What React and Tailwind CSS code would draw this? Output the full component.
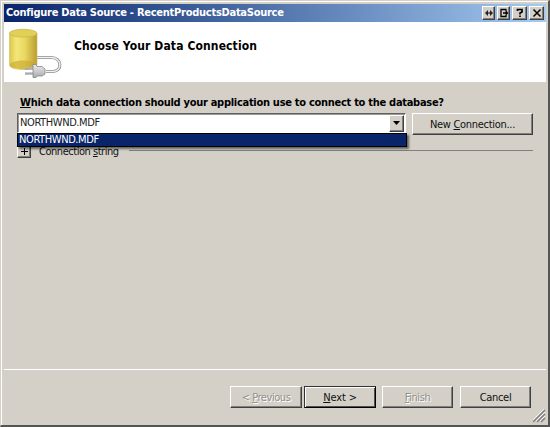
import React from "react";

const raised =
  "border border-t-white border-l-white border-r-[#404040] border-b-[#404040] shadow-[inset_-1px_-1px_0_#808080]";

function Key({ children }) {
  return <span className="underline decoration-1 underline-offset-1">{children}</span>;
}

function Caption({ width, children }) {
  return (
    <div className={`${width} ${raised} flex h-[14px] items-center justify-center bg-[#d4d0c8]`}>
      <svg width="10" height="10" viewBox="0 0 10 10" fill="none" stroke="#000" strokeWidth="1.500">
        {children}
      </svg>
    </div>
  );
}

function Button({ className, disabled, primary, children }) {
  return (
    <div
      className={`flex h-[22px] items-center justify-center whitespace-nowrap bg-[#d4d0c8] leading-[11px] ${
        primary
          ? "border border-t-[#333] border-l-[#333] border-r-black border-b-black shadow-[inset_1px_1px_0_#fff,inset_-1px_-1px_0_#505050]"
          : raised
      } ${disabled ? "text-[#929089] [text-shadow:1px_1px_0_#fff]" : "text-[#111]"} ${className}`}
    >
      <span>{children}</span>
    </div>
  );
}

function DatabaseIcon() {
  return (
    <svg className="ml-[4px] mt-[6px] shrink-0" width="60" height="50" viewBox="0 0 60 50">
      <defs>
        <linearGradient id="side">
          <stop offset="0" stopColor="#dcc746" />
          <stop offset="0.25" stopColor="#f3e67b" />
          <stop offset="0.55" stopColor="#ead960" />
          <stop offset="1" stopColor="#b99d33" />
        </linearGradient>
        <linearGradient id="plug" x2="0" y2="1">
          <stop offset="0" stopColor="#eee" />
          <stop offset="1" stopColor="#aaa" />
        </linearGradient>
      </defs>
      <path d="M1.500 5v32c0 6 27.500 6 27.500 0V5" fill="url(#side)" stroke="#d2bc52" strokeWidth=".6" />
      <path d="M2 37c0-6 26.500-6 26.500 0c0 5.500-26.500 5.500-26.500 0" fill="#c9a52e" opacity=".6" />
      <ellipse cx="15.200" cy="5.200" rx="13.700" ry="3.900" fill="#e2d056" stroke="#ccb74d" strokeWidth=".8" />
      <path d="M29 29.500H43c11.500 0 11.500 14 2 14H38" fill="none" stroke="#8c8c8c" strokeWidth="3" />
      <path d="M29 29.500H43c11.500 0 11.500 14 2 14H38" fill="none" stroke="#f2f2f2" strokeWidth="1.400" />
      <path d="M17 40.500h9M17 45.500h9" stroke="#888" strokeWidth="2.200" />
      <path d="M17 40h9M17 45h9" stroke="#ddd" strokeWidth=".8" />
      <path d="M25 36.500h3l1 2h5l3 2.500v5L34 48h-5l-1 1.500h-3z" fill="url(#plug)" stroke="#858585" strokeWidth=".8" />
    </svg>
  );
}

export default function App() {
  return (
    <div className="h-[427px] w-[550px] overflow-hidden bg-[#d4d0c8] font-['DejaVu_Sans_Condensed','DejaVu_Sans',sans-serif] text-[11px] text-[#111] [font-stretch:condensed]">
      <div className="flex h-full flex-col border-b-2 border-l border-r-2 border-t border-b-[#555] border-l-[#d4d0c8] border-r-[#555] border-t-[#d4d0c8]">
        <div className="flex min-h-0 flex-1 flex-col border-l border-t border-white pl-[2px] pr-[2px] pt-[2px]">
          <header className="flex h-[18px] shrink-0 items-center bg-linear-to-r from-[#0a246a] to-[#a6caf0] pl-[2px] pr-[2px]">
            <h1 className="flex-1 whitespace-nowrap text-[11px] font-bold tracking-[-0.260px] text-white">
              Configure Data Source - RecentProductsDataSource
            </h1>
            <div className="flex gap-[2px]">
              <Caption width="w-[13px]">
                <path d="M1 5l3-3v6zM9 5L6 2v6z" fill="#222" stroke="none" />
                <path d="M4 5h2" strokeWidth="1" />
              </Caption>
              <Caption width="w-[13px]">
                <path d="M7 3.500V1.500H2v7h5V6.500M4 5h4M7 3.500L8.500 5 7 6.500" strokeWidth="1.300" />
              </Caption>
              <Caption width="w-[15px]">
                <path d="M2.500 3V1.500h4.500V4L5 5v1.500M5 7.500V9" strokeWidth="1.700" />
              </Caption>
              <Caption width="w-[15px]">
                <path d="M1.500 1.500l7 7M8.500 1.500l-7 7" />
              </Caption>
            </div>
          </header>
          <section className="flex h-[60px] shrink-0 bg-white">
            <DatabaseIcon />
            <h2 className="ml-[6px] mt-[16px] whitespace-nowrap text-[12px] font-bold leading-[16px] tracking-[0.125px] text-black">
              Choose Your Data Connection
            </h2>
          </section>
          <main className="flex flex-1 flex-col pl-[13px] pr-[13px] pt-[14px]">
            <div className="ml-[3px] h-[17px] whitespace-nowrap text-[11px] font-bold leading-[14px] tracking-[-0.285px] text-black">
              <Key>W</Key>hich data connection should your application use to connect to the database?
            </div>
            <div className="flex items-start justify-between">
              <div className="relative w-[390px]">
                <div className="flex h-[20px] w-[389px] items-center border border-b-white border-l-[#606060] border-r-white border-t-[#606060] bg-white pl-[2px] shadow-[inset_1px_1px_0_#999]">
                  <span className="flex-1 tracking-[-0.400px] text-[#222]">NORTHWND.MDF</span>
                  <span className={`${raised} mr-[1px] flex h-[17px] w-[15px] items-center justify-center bg-[#d4d0c8]`}>
                    <svg width="7" height="4"><path d="M0 0h7L3.500 4z" /></svg>
                  </span>
                </div>
                <div className="absolute left-0 top-[20px] z-10 flex h-[14px] w-[390px] items-center border border-black bg-[#0a246a] pl-[1px] leading-[12px] tracking-[-0.400px] text-white shadow-[2px_2px_2px_#0008]">
                  NORTHWND.MDF
                </div>
              </div>
              <Button className="w-[121px] tracking-[-0.300px]">
                New <Key>C</Key>onnection...
              </Button>
            </div>
            <div className="mt-[9px] flex h-[14px] items-center">
              <div className={`${raised} flex h-[14px] w-[14px] shrink-0 items-center justify-center`}>
                <svg width="7" height="7"><path d="M0 3.500h7M3.500 0v7" stroke="#000" /></svg>
              </div>
              <span className="ml-[8px] w-[90px] whitespace-nowrap leading-[11px] tracking-[-0.470px]">
                Connection <Key>s</Key>tring
              </span>
              <div className="mb-[2px] h-px flex-1 bg-[#808080]" />
            </div>
          </main>
          <footer className="flex h-[56px] shrink-0 items-start border-t border-t-white pl-[226px] pt-[16px]">
            <Button className="w-[72px] tracking-[-0.450px]" disabled>
              &lt; <Key>P</Key>revious
            </Button>
            <Button className="ml-[2px] w-[72px] tracking-[-0.150px]" primary>
              <Key>N</Key>ext &gt;
            </Button>
            <Button className="ml-[6px] w-[71px] tracking-[-0.400px]" disabled>
              <Key>F</Key>inish
            </Button>
            <Button className="ml-[7px] w-[71px] tracking-[-0.300px]">Cancel</Button>
            <svg className="mb-[2px] ml-[2px] self-end" width="13" height="14">
              <path d="M0 13L12 1M4 13L12 5M8 13L12 9" stroke="#808080" strokeWidth="1.500" />
              <path d="M-1 12L11 0M3 12L12 3M7 12L12 7" stroke="#fff" strokeWidth=".8" />
            </svg>
          </footer>
        </div>
      </div>
    </div>
  );
}
